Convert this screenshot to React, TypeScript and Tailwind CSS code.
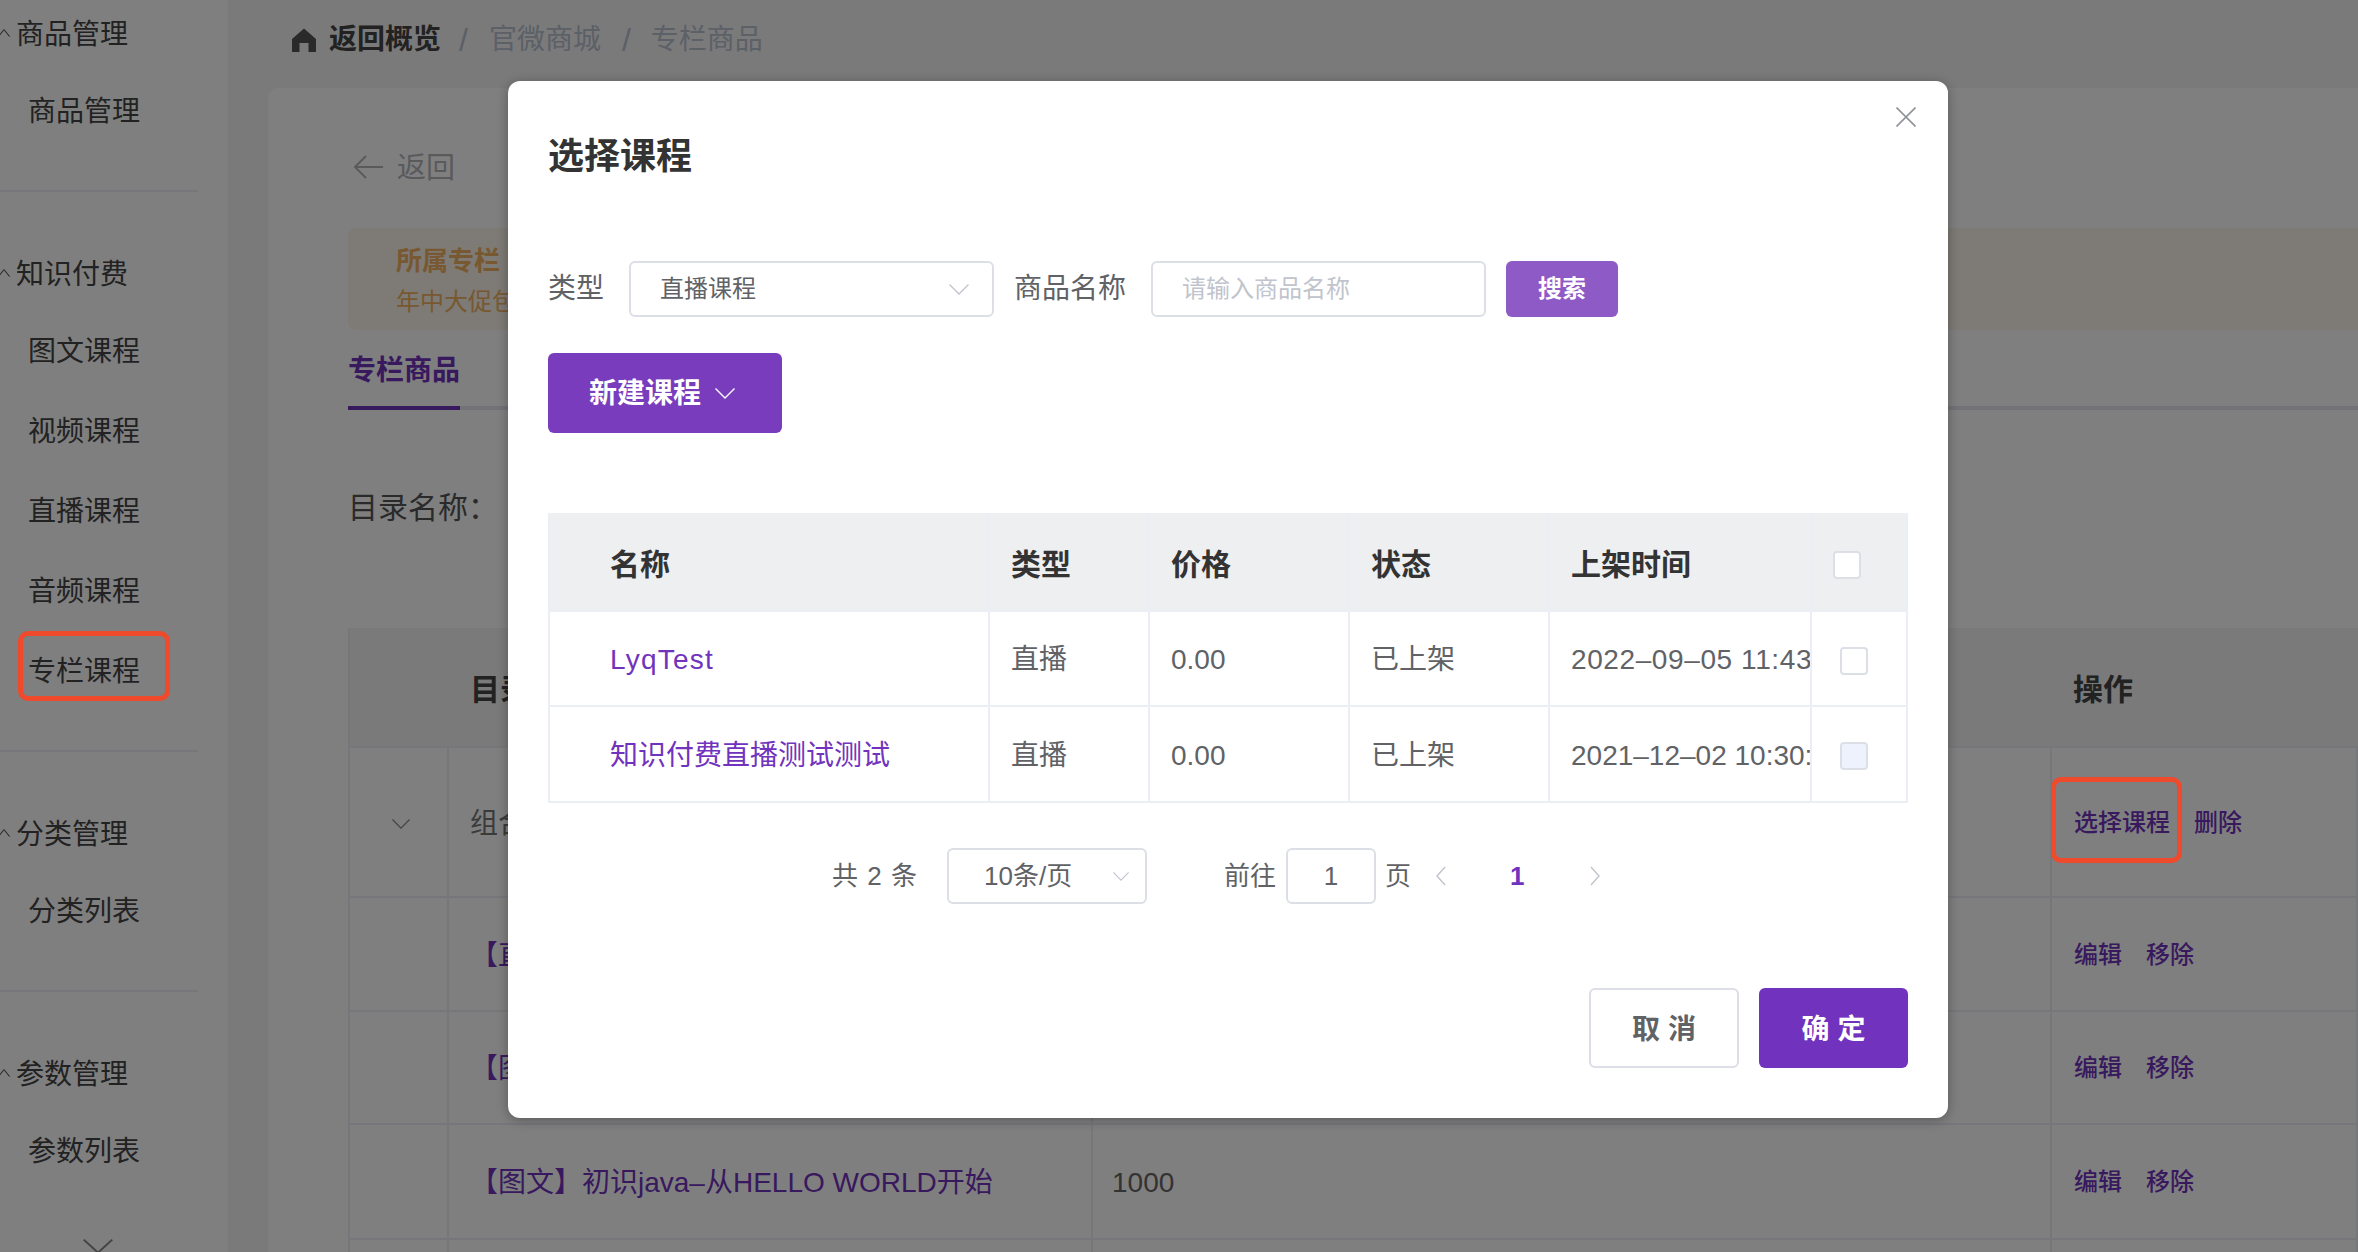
import React from "react";

const PURPLE = "text-[#7133bd]";

function Chevron({ className, up }: { className: string; up?: boolean }) {
  return (
    <svg viewBox="0 0 20 11" fill="none" stroke="currentColor" strokeWidth="1.4" preserveAspectRatio="none" className={className}>
      <path d={up ? "M0.5 10.5L10 1l9.5 9.5" : "M0.5 0.5L10 10l9.5-9.5"} />
    </svg>
  );
}

function SideGroup({ title, items, mt }: { title: string; items: string[]; mt: string }) {
  return (
    <div className={mt}>
      <div className="relative flex h-[40px] items-center pl-[16px] pt-[3px] text-[28px] leading-none">
        <Chevron up className="absolute -left-[2px] top-[16px] h-[8px] w-[12px]" />
        {title}
      </div>
      <div className="mt-[17px]">
        {items.map((item) => (
          <div key={item} className="flex h-[80px] items-center pl-[28px] pt-[3px] text-[28px] leading-none">
            {item}
          </div>
        ))}
      </div>
    </div>
  );
}

function Sidebar() {
  return (
    <aside className="relative h-full w-[228px] shrink-0 overflow-hidden bg-white text-[#444]">
      <SideGroup title="商品管理" items={["商品管理"]} mt="mt-[13px]" />
      <div className="mt-[40px] h-[2px] w-[198px] bg-[#ebeef5]" />
      <SideGroup title="知识付费" items={["图文课程", "视频课程", "直播课程", "音频课程", "专栏课程"]} mt="mt-[61px]" />
      <div className="mt-[40px] h-[2px] w-[198px] bg-[#ebeef5]" />
      <SideGroup title="分类管理" items={["分类列表"]} mt="mt-[61px]" />
      <div className="mt-[40px] h-[2px] w-[198px] bg-[#ebeef5]" />
      <SideGroup title="参数管理" items={["参数列表"]} mt="mt-[61px]" />
      <div className="mt-[49px] flex w-[196px] justify-center text-[#888]">
        <Chevron className="h-[15px] w-[30px]" />
      </div>
    </aside>
  );
}

function Breadcrumb() {
  return (
    <div className="mb-[12px] flex h-[76px] items-center pl-[24px] pt-[3px] text-[28px] leading-none text-[#b8c0cf]">
      <svg viewBox="0 0 24 24" className="mr-[13px] h-[24px] w-[24px] fill-[#555]">
        <path d="M12 0.5L24 11v13h-7.5v-9h-9v9H0V11z" />
      </svg>
      <span className="font-bold text-[#444]">返回概览</span>
      <span className="ml-[18px] mr-[21px] text-[32px] text-[#b8c0cf]">/</span>
      <span>官微商城</span>
      <span className="ml-[21px] mr-[20px] text-[32px] text-[#b8c0cf]">/</span>
      <span>专栏商品</span>
    </div>
  );
}

const cellLine = "border-b-2 border-r-2 border-[#ebeef5]";

function OpsCell({ first }: { first?: boolean }) {
  return (
    <div className={`flex items-center gap-[24px] pl-[22px] pt-[1px] text-[24px] font-medium leading-none ${PURPLE} ${cellLine}`}>
      {first ? <span>选择课程</span> : <span>编辑</span>}
      {first ? <span>删除</span> : <span>移除</span>}
    </div>
  );
}

function CatalogTable() {
  const rows = [
    { h: "h-[114px]", name: "【直播】知识付费直播测试测试", value: "1000" },
    { h: "h-[113px]", name: "【图文】初识java–从HELLO WORLD开始", value: "1000" },
    { h: "h-[115px]", name: "【图文】初识java–从HELLO WORLD开始", value: "1000" },
  ];
  return (
    <div className="mt-[101px] grid grid-cols-[99px_644px_959px_1fr] border-l-2 border-[#ebeef5] text-[28px] leading-none">
      <div className="col-span-3 flex h-[120px] items-center border-b-2 border-[#ebeef5] bg-[#f5f5f5] pl-[120px] pt-[5px] text-[30px] font-bold text-[#444]">目录名称</div>
      <div className="flex h-[120px] items-center border-b-2 border-[#ebeef5] bg-[#f5f5f5] pl-[21px] pt-[5px] text-[30px] font-bold text-[#444]">操作</div>

      <div className={`flex h-[150px] items-center justify-center pl-[4px] pt-[3px] text-[#888] ${cellLine}`}>
        <Chevron className="h-[10px] w-[18px]" />
      </div>
      <div className={`col-span-2 flex items-center pl-[21px] pt-[3px] text-[#777] ${cellLine}`}>组合课程</div>
      <OpsCell first />

      {rows.map((row, i) => (
        <React.Fragment key={i}>
          <div className={`${row.h} ${cellLine}`} />
          <div className={`flex items-center pl-[21px] pt-[3px] ${PURPLE} ${cellLine}`}>{row.name}</div>
          <div className={`flex items-center pl-[19px] pt-[3px] text-[#666] ${cellLine}`}>{row.value}</div>
          <OpsCell />
        </React.Fragment>
      ))}
      <div className={`h-[100px] ${cellLine}`} />
      <div className={cellLine} />
      <div className={cellLine} />
      <div className={cellLine} />
    </div>
  );
}

function MainCard() {
  return (
    <div className="flex-1 overflow-hidden rounded-tl-[10px] bg-white pl-[80px] pt-[59px]">
      <div className="flex h-[40px] items-center pl-[6px] text-[29px] leading-none text-[#b4b5bb]">
        <svg viewBox="0 0 29 24" fill="none" stroke="currentColor" strokeWidth="2" className="mr-[14px] h-[24px] w-[29px]">
          <path d="M12 1L1 12l11 11M1 12h28" />
        </svg>
        <span className="pt-[2px]">返回</span>
      </div>
      <div className="mt-[41px] flex h-[102px] flex-col justify-center gap-[16px] rounded-l-[8px] bg-[#fdf6ec] pl-[48px] pt-[3px] leading-none text-[#f0b060]">
        <div className="text-[26px] font-bold">所属专栏</div>
        <div className="text-[24px]">年中大促包邮专栏</div>
      </div>
      <div className="h-[80px] border-b-4 border-[#e4e7ed]">
        <div className="flex h-[80px] w-[112px] items-center border-b-4 border-[#7133bd] pt-[6px] text-[28px] font-bold leading-none text-[#7133bd]">专栏商品</div>
      </div>
      <div className="mt-[77px] flex h-[40px] items-center pt-[2px] text-[30px] leading-none text-[#555]">目录名称：</div>
      <CatalogTable />
    </div>
  );
}

const fieldBox = "box-border h-[56px] rounded-[6px] border-2 border-[#dcdfe6] bg-white";
const courseCols = "grid grid-cols-[442px_160px_200px_200px_262px_96px] text-[28px] leading-none";
const courseCell = "flex items-center overflow-hidden whitespace-nowrap border-b-2 border-r-2 border-[#ebeef5] pl-[21px] pt-[3px]";

function Checkbox({ disabled, className }: { disabled?: boolean; className?: string }) {
  return (
    <span className={`block h-[28px] w-[28px] rounded-[4px] border-2 border-[#dcdfe6] ${disabled ? "bg-[#edf2fc]" : "bg-white"} ${className ?? ""}`} />
  );
}

function CourseRow({ name, time, h, nameTrack, timeTrack, disabled }: { name: string; time: string; h: string; nameTrack?: string; timeTrack?: string; disabled?: boolean }) {
  return (
    <>
      <div className={`${courseCell} ${h} border-l-2 pl-[60px] ${nameTrack ?? ""} ${PURPLE}`}>{name}</div>
      <div className={`${courseCell} text-[#606266]`}>直播</div>
      <div className={`${courseCell} text-[#606266]`}>0.00</div>
      <div className={`${courseCell} text-[#606266]`}>已上架</div>
      <div className={`${courseCell} ${timeTrack ?? ""} text-[#606266]`}>{time}</div>
      <div className={`${courseCell} pl-[28px] pt-[4px]`}>
        <Checkbox disabled={disabled} />
      </div>
    </>
  );
}

function CourseTable() {
  const head = "flex items-center border-b-2 border-r-2 border-[#ebeef5] bg-[#eeeff0] pl-[21px] pt-[6px] text-[30px] font-bold text-[#333]";
  return (
    <div className={`mt-[80px] ${courseCols}`}>
      <div className={`${head} h-[99px] border-l-2 pl-[60px]`}>名称</div>
      <div className={head}>类型</div>
      <div className={head}>价格</div>
      <div className={head}>状态</div>
      <div className={head}>上架时间</div>
      <div className={`${head} pl-[20px] pt-[7px]`}>
        <Checkbox />
      </div>
      <CourseRow name="LyqTest" nameTrack="tracking-[1.2px]" time="2022–09–05 11:43:20" timeTrack="tracking-[0.6px]" h="h-[95px]" />
      <CourseRow name="知识付费直播测试测试" time="2021–12–02 10:30:15" h="h-[96px]" disabled />
    </div>
  );
}

function Pagination() {
  return (
    <div className="mt-[45px] flex h-[56px] items-center pl-[284px] text-[26px] leading-none text-[#606266]">
      <span className="w-[84px] whitespace-nowrap [word-spacing:2px]">共 2 条</span>
      <div className={`${fieldBox} ml-[31px] flex w-[200px] items-center justify-between pl-[35px] pr-[16px]`}>
        <span>10条/页</span>
        <Chevron className="h-[9px] w-[16px] text-[#c0c4cc]" />
      </div>
      <span className="ml-[77px]">前往</span>
      <div className={`${fieldBox} ml-[10px] flex w-[90px] items-center justify-center`}>1</div>
      <span className="ml-[9px]">页</span>
      <svg viewBox="0 0 10 20" fill="none" stroke="currentColor" strokeWidth="1.4" className="ml-[25px] h-[20px] w-[10px] text-[#c0c4cc]">
        <path d="M9 1L1 10l8 9" />
      </svg>
      <span className={`ml-[64px] w-[14px] font-bold ${PURPLE}`}>1</span>
      <svg viewBox="0 0 10 20" fill="none" stroke="currentColor" strokeWidth="1.4" className="ml-[66px] h-[20px] w-[10px] text-[#c0c4cc]">
        <path d="M1 1l8 9-8 9" />
      </svg>
    </div>
  );
}

function CourseDialog() {
  return (
    <div className="absolute left-[508px] top-[81px] w-[1440px] rounded-[12px] bg-white px-[40px] pb-[50px] pt-[54px] shadow-[0_2px_12px_rgba(0,0,0,0.3)]">
      <svg viewBox="0 0 20 20" fill="none" stroke="#909399" strokeWidth="1.6" className="absolute right-[32px] top-[26px] h-[20px] w-[20px]">
        <path d="M0.5 0.5l19 19M19.5 0.5l-19 19" />
      </svg>
      <h2 className="flex h-[40px] items-center pt-[3px] text-[36px] font-bold leading-none text-[#333]">选择课程</h2>

      <div className="mt-[86px] flex items-center text-[28px] leading-none text-[#606266]">
        <span>类型</span>
        <div className={`${fieldBox} ml-[25px] flex w-[365px] items-center justify-between pl-[29px] pr-[23px] text-[24px]`}>
          <span>直播课程</span>
          <Chevron className="h-[11px] w-[20px] text-[#c0c4cc]" />
        </div>
        <span className="ml-[20px]">商品名称</span>
        <input
          placeholder="请输入商品名称"
          className={`${fieldBox} ml-[25px] w-[335px] pl-[29px] text-[24px] outline-none placeholder:text-[#c0c4cc]`}
        />
        <button className="ml-[20px] h-[56px] w-[112px] rounded-[6px] bg-[#8e5ac6] text-[24px] font-bold text-white">搜索</button>
      </div>

      <button className="mt-[36px] flex h-[80px] w-[234px] items-center gap-[14px] rounded-[6px] bg-[#783cbd] pl-[41px] text-[28px] font-bold leading-none text-white">
        <span className="pt-[2px]">新建课程</span>
        <Chevron className="h-[11px] w-[20px]" />
      </button>

      <CourseTable />
      <Pagination />

      <div className="mt-[84px] flex justify-end gap-[20px] text-[28px] font-bold leading-none">
        <button className="h-[80px] w-[150px] rounded-[6px] border-2 border-[#dcdfe6] bg-white pt-[3px] text-[#606266]">取 消</button>
        <button className="h-[80px] w-[149px] rounded-[6px] bg-[#7133bd] pt-[3px] text-white">确 定</button>
      </div>
    </div>
  );
}

export default function App() {
  return (
    <div className="relative flex h-[1252px] w-[2358px] overflow-hidden bg-[#f5f5f5] font-['Liberation_Sans','Noto_Sans_CJK_SC',sans-serif]">
      <Sidebar />
      <main className="flex min-w-0 flex-1 flex-col pl-[40px]">
        <Breadcrumb />
        <MainCard />
      </main>

      {/* dim layer and dialog */}
      <div className="absolute inset-0 bg-black/50" />
      <CourseDialog />

      {/* red annotation boxes drawn on top of the shot */}
      <div className="absolute left-[18px] top-[631px] h-[70px] w-[152px] rounded-[10px] border-[5px] border-[#ee4a2b]" />
      <div className="absolute left-[2051px] top-[777px] h-[86px] w-[131px] rounded-[10px] border-[5px] border-[#ee4a2b]" />
    </div>
  );
}
